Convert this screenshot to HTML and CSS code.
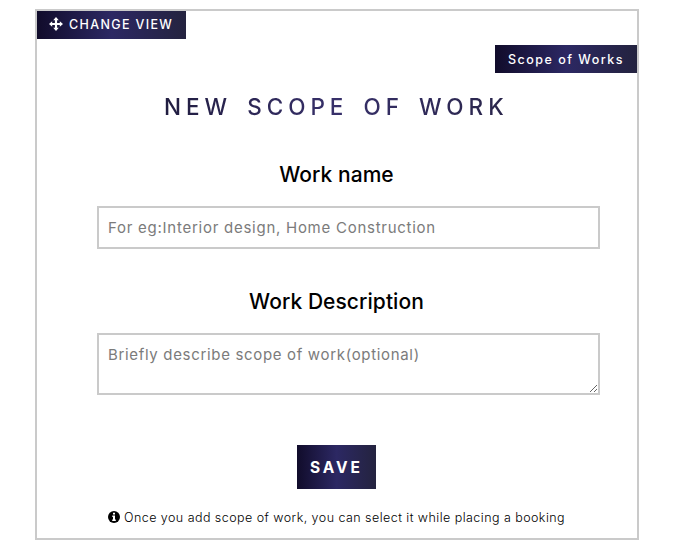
FILE: index.html
```html
<!DOCTYPE html>
<html lang="en">
<head>
<meta charset="utf-8">
<title>New Scope of Work</title>
<link rel="stylesheet" href="styles.css">
</head>
<body>
<main class="panel">
  <button class="tab tab-view" type="button">
    <svg class="move-icon" viewBox="0 0 14 14" aria-hidden="true"><path d="M7 0 9.800 3.200H8.100V5.900H10.800V4.200L14 7l-3.200 2.800V8.100H8.100v2.700h1.700L7 14 4.200 10.800h1.700V8.100H3.200v1.700L0 7l3.200-2.800v1.700h2.700V3.200H4.200z"/></svg>
    <span>CHANGE VIEW</span>
  </button>
  <button class="tab tab-list" type="button"><span>Scope of Works</span></button>
  <h1 class="title"><span>NEW SCOPE OF WORK</span></h1>
  <form class="form">
    <label class="label" for="name">Work name</label>
    <input class="field" id="name" type="text" placeholder="For eg:Interior design, Home Construction">
    <label class="label" for="desc">Work Description</label>
    <textarea class="field area" id="desc" placeholder="Briefly describe scope of work(optional)"></textarea>
    <button class="save" type="button"><span>SAVE</span></button>
  </form>
  <p class="note">
    <svg class="info-icon" viewBox="0 0 12 12" aria-hidden="true"><circle cx="6" cy="6" r="6"/><path d="M5 1.800h2v1.700H5zM4.300 4.500H7v4h.8V10H4.200V8.500H5V6h-.7z" fill="#fff"/></svg>
    <span>Once you add scope of work, you can select it while placing a booking</span>
  </p>
</main>
</body>
</html>
```
FILE: styles.css
```css
* {
  box-sizing: border-box;
}

body {
  margin: 0;
  background: #fff;
  color: #000;
  font-family: Inter, "Liberation Sans", sans-serif;
}

.panel {
  display: flex;
  flex-direction: column;
  width: 604px;
  height: 531px;
  margin: 9px 0 0 35px;
  border: 2px solid #cacaca;
}

.tab,
.save {
  display: flex;
  align-items: center;
  padding: 0;
  border: 0;
  background: linear-gradient(to right, #110c2b, #2c2863 50%, #24233f);
  color: #fff;
  font-family: inherit;
  white-space: nowrap;
}

.tab {
  height: 28px;
  font-size: 12.5px;
  font-weight: 500;
}

.tab-view {
  width: 149px;
  padding: 0 0 2px 12px;
  gap: 6px;
  letter-spacing: 1.35px;
}

.tab-list {
  align-self: flex-end;
  width: 142px;
  margin-top: 6px;
  padding-left: 13px;
  letter-spacing: 1.5px;
}

.move-icon {
  width: 14px;
  height: 14px;
  fill: #fff;
}

.title {
  margin: 19px 0 0 127px;
  font-size: 22.5px;
  font-weight: 500;
  line-height: 30px;
  letter-spacing: 5px;
  word-spacing: 4px;
  white-space: nowrap;
}

.title span {
  background: linear-gradient(to right, #211d40, #37306a 50%, #29254a);
  background-clip: text;
  color: transparent;
}

.form {
  display: flex;
  flex-direction: column;
  width: 503px;
  margin-left: 60px;
}

.label {
  align-self: center;
  height: 30px;
  margin: 37px 24px 17px 0;
  font-size: 21px;
  font-weight: 500;
  line-height: 32px;
  letter-spacing: 0.06px;
  white-space: nowrap;
}

.field {
  width: 100%;
  height: 43px;
  padding: 0 9px;
  border: 2px solid #cacaca;
  border-radius: 0;
  background: #fff;
  font-family: inherit;
  font-size: 15px;
  letter-spacing: 0.74px;
}

.field::placeholder {
  color: #7b7b7b;
  opacity: 1;
}

.area {
  display: block;
  height: 62px;
  padding-top: 10px;
  line-height: 20px;
  letter-spacing: 0.67px;
  overflow: hidden;
}

.save {
  width: 79px;
  height: 44px;
  margin: 50px 0 0 200px;
  padding: 1px 0 0 13px;
  font-size: 15.5px;
  font-weight: 700;
  letter-spacing: 2.9px;
}

.note {
  display: flex;
  align-items: center;
  height: 20px;
  margin: 18px 0 0 71px;
  gap: 4px;
  font-size: 12.5px;
  font-weight: 300;
  letter-spacing: 0.45px;
  white-space: nowrap;
}

.info-icon {
  width: 12px;
  height: 12px;
}
```
